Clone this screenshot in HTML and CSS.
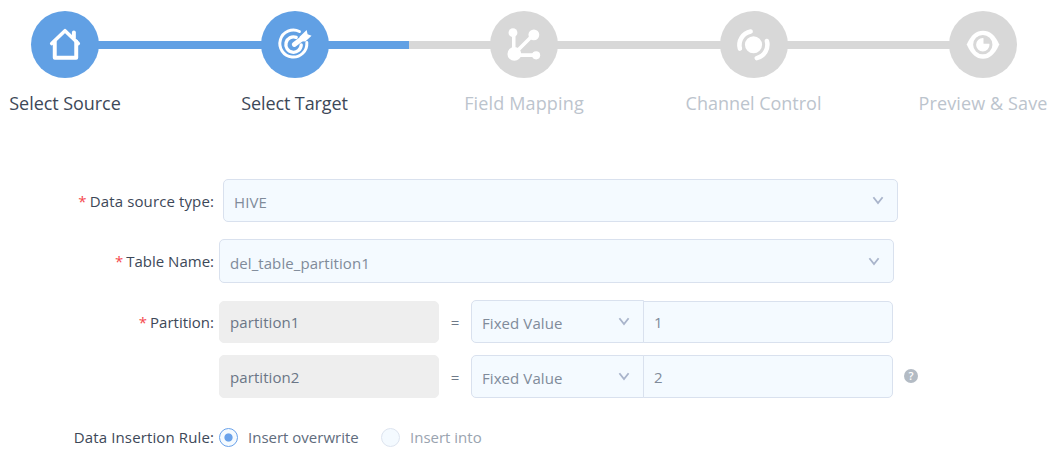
FILE: index.html
```html
<!DOCTYPE html>
<html lang="en">
<head>
<meta charset="utf-8">
<title>Select Target</title>
<link rel="stylesheet" href="styles.css">
</head>
<body>
<svg class="defs" width="0" height="0">
  <symbol id="chevron" viewBox="0 0 12 9"><path d="M1.4 1.2 6 7 10.6 1.2" fill="none" stroke="#a9b4cb" stroke-width="1.8"/></symbol>
</svg>
<nav class="steps">
  <div class="track">
    <div class="circle done">
      <svg viewBox="0 0 68 68"><g fill="none" stroke="#fff" stroke-linejoin="round" stroke-linecap="round"><path d="M20.5 33 34 20 47.5 33" stroke-width="3.6"/><path d="M23.6 31V47.4H45.4V31" stroke-width="4"/><path d="M43 21.8V27" stroke-width="4"/></g></svg>
    </div>
    <div class="line done"></div>
    <div class="circle done">
      <svg viewBox="0 0 68 68"><g fill="none" stroke="#fff" stroke-linecap="round"><path d="M38.5 20.8A13.7 13.7 0 1 0 46 32" stroke-width="3"/><path d="M35.2 26.8A7.8 7.8 0 1 0 40.3 34.5" stroke-width="3.4"/><path d="M33.3 34 42 27.5" stroke-width="5"/></g><path d="M38.5 26.5 45.8 19.2 46.8 23.7 50.8 25 44.5 31 40.5 30.8Z" fill="#fff"/></svg>
    </div>
    <div class="line half"></div>
    <div class="circle">
      <svg viewBox="0 0 68 68"><path d="M23.6 43.5V22M24.2 43.5 44 23.5M24.2 44.8H46.5" fill="none" stroke="#fff" stroke-width="3.6"/><g fill="#fff"><circle cx="22.8" cy="22" r="4.5"/><circle cx="44" cy="24.2" r="5.5"/><circle cx="24.2" cy="43.6" r="7"/><circle cx="46.3" cy="45" r="4.1"/></g></svg>
    </div>
    <div class="line"></div>
    <div class="circle">
      <svg viewBox="0 0 68 68"><circle cx="33.5" cy="34.2" r="8.7" fill="#fff"/><g fill="none" stroke="#fff" stroke-width="4.6" stroke-linecap="round"><path d="M30.6 20.8A14 14 0 0 0 19.7 38.2"/><path d="M47.1 30.5A14 14 0 0 1 36.8 47.8"/></g></svg>
    </div>
    <div class="line"></div>
    <div class="circle">
      <svg viewBox="0 0 68 68"><path d="M17.5 34C22 24 27 20 34 20S46 24 50.5 34C46 44 41 48.5 34 48.5S22 44 17.5 34Z" fill="#fff"/><circle cx="33.8" cy="34.2" r="8.3" fill="none" stroke="#d8d8d8" stroke-width="3"/><path d="M34.5 27V33.2H41A7 7 0 0 0 34.5 27Z" fill="#d8d8d8"/></svg>
    </div>
  </div>
  <div class="names">
    <span class="name on n1">Select Source</span>
    <span class="name on n2">Select Target</span>
    <span class="name n3">Field Mapping</span>
    <span class="name n4">Channel Control</span>
    <span class="name n5">Preview &amp; Save</span>
  </div>
</nav>
<form class="form">
  <div class="row source">
    <label class="label"><i>*</i>Data source type:</label>
    <div class="field wide"><span>HIVE</span><svg class="chev"><use href="#chevron"/></svg></div>
  </div>
  <div class="row table">
    <label class="label"><i>*</i>Table Name:</label>
    <div class="field wide"><span>del_table_partition1</span><svg class="chev"><use href="#chevron"/></svg></div>
  </div>
  <div class="row part first">
    <label class="label"><i>*</i>Partition:</label>
    <div class="field key"><span>partition1</span></div>
    <span class="eq">=</span>
    <div class="field mode"><span>Fixed Value</span><svg class="chev"><use href="#chevron"/></svg></div>
    <div class="field val"><span>1</span></div>
  </div>
  <div class="row part second">
    <label class="label"></label>
    <div class="field key"><span>partition2</span></div>
    <span class="eq">=</span>
    <div class="field mode"><span>Fixed Value</span><svg class="chev"><use href="#chevron"/></svg></div>
    <div class="field val"><span>2</span></div>
    <span class="help">?</span>
  </div>
  <div class="row rule">
    <label class="label">Data Insertion Rule:</label>
    <span class="radio checked"></span><span class="opt">Insert overwrite</span>
    <span class="radio"></span><span class="opt off">Insert into</span>
  </div>
</form>
</body>
</html>
```
FILE: styles.css
```css
* { box-sizing: border-box; }
body { margin: 0; background: #fff; font-family: "Open Sans", "Noto Sans", sans-serif; font-size: 15px; color: #3d4858; height: 466px; overflow: hidden; }
.defs { display: block; }
.steps { padding-top: 11px; height: 179px; }
.track { display: flex; align-items: center; padding: 0 40px 0 31px; }
.circle { flex: none; width: 68px; height: 67px; border-radius: 50%; background: #d8d8d8; }
.circle svg { display: block; width: 68px; height: 67px; }
.line { flex: 1; height: 8px; margin: 0 -1px; background: #d8d8d8; }
.done { background: #61a0e4; }
.half { background: linear-gradient(90deg, #61a0e4 50%, #d8d8d8 50%); }
.names { display: flex; justify-content: space-between; width: 1048px; margin-top: 12px; }
.name { width: 130px; display: flex; justify-content: center; white-space: nowrap; font-size: 18px; line-height: 26px; color: #bcc4cd; }
.on { color: #3d4858; }
.n1 { letter-spacing: -0.06px; }
.n2 { letter-spacing: -0.1px; }
.n3 { letter-spacing: 0.15px; }
.n4 { letter-spacing: -0.02px; }
.n5 { letter-spacing: 0.12px; }
.row { display: flex; align-items: center; white-space: nowrap; }
.label { width: 214px; text-align: right; letter-spacing: 0.12px; }
.table .label, .first .label { letter-spacing: 0; }
.label i { font-style: normal; color: #f5484d; margin-right: 3px; }
.field { display: flex; align-items: center; justify-content: space-between; height: 43px; padding: 3px 13px 0 10px; border: 1px solid #d9e1ee; border-radius: 5px; background: #f4faff; color: #808b9a; letter-spacing: 0.08px; }
.wide { width: 675px; }
.chev { width: 12px; height: 9px; margin-top: -3px; }
.source .field { margin-left: 9px; }
.table { margin-top: 17px; }
.table .field { margin-left: 5px; height: 44px; padding-top: 3px; }
.part { height: 43px; }
.first { margin-top: 17px; }
.second { margin-top: 12px; }
.key { width: 220px; margin-left: 5px; border-color: #eee; background: #eee; color: #6b7686; padding-top: 1px; }
.eq { width: 32px; text-align: center; color: #6f7a89; }
.mode { width: 173px; border-radius: 5px 0 0 5px; padding-top: 2px; }
.val { width: 250px; margin-left: -1px; border-radius: 0 5px 5px 0; padding-top: 1px; }
.first .key, .first .val { height: 42px; margin-top: 1px; padding-top: 0; }
.help { width: 14px; height: 14px; margin: -1px 0 0 11px; border-radius: 50%; background: #b3bbc4; color: #fff; font-size: 11px; font-weight: 600; line-height: 14px; text-align: center; }
.rule { margin-top: 28px; height: 22px; }
.radio { width: 19px; height: 19px; margin-left: 5px; border: 1px solid #dde4ef; border-radius: 50%; background: #f4faff; }
.checked { border-color: #6aa2ea; background: radial-gradient(circle, #6aa2ea 0 3.6px, #f4faff 4.6px); }
.opt { width: 138px; padding-left: 10px; color: #606c7d; }
.off { color: #9aa4b0; }
```
